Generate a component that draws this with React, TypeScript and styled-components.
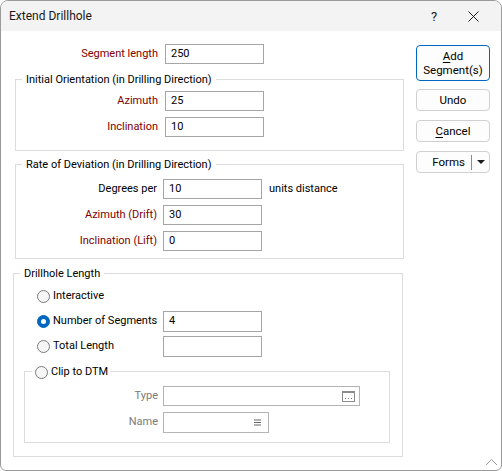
import React from "react";
import styled, { createGlobalStyle } from "styled-components";

const FONT = `Roboto, "Noto Sans", "Liberation Sans", sans-serif`;

const Global = createGlobalStyle`
  html, body { margin: 0; padding: 0; background: #ffffff; }
  body { font-family: ${FONT}; font-size: 11px; color: #000; }
  * { box-sizing: border-box; }
`;

const Window = styled.div`
  position: relative;
  width: 502px;
  height: 471px;
  border: 1px solid #9a9a9a;
  border-radius: 8px 8px 6px 6px;
  background: #ffffff;
  overflow: hidden;
  display: flex;
  flex-direction: column;
`;

const TitleBar = styled.div`
  height: 30px;
  flex: none;
  background: #f3f3f3;
  display: flex;
  align-items: center;
  padding-left: 8px;
`;

const Title = styled.div`
  flex: 1;
  font-size: 12px;
  color: #1a1a1a;
  line-height: 16px;
  margin-top: -1px;
`;

const TitleButton = styled.div<{ $w: number }>`
  width: ${(p) => p.$w}px;
  height: 30px;
  display: flex;
  align-items: center;
  justify-content: center;
  font-size: 13px;
  color: #1a1a1a;
`;

const TitleEnd = styled.div`
  width: 5px;
`;

const Body = styled.div`
  flex: 1;
  display: flex;
  padding-left: 12px;
`;

const MainColumn = styled.div`
  width: 391px;
  display: flex;
  flex-direction: column;
  padding-top: 13px;
`;

const ButtonColumn = styled.div`
  width: 74px;
  margin-left: 12px;
  padding-top: 14px;
  display: flex;
  flex-direction: column;
`;

const Row = styled.div<{ $mt?: number; $pl?: number }>`
  display: flex;
  align-items: center;
  height: 20px;
  margin-top: ${(p) => p.$mt ?? 0}px;
  padding-left: ${(p) => p.$pl ?? 0}px;
`;

const Label = styled.div<{ $w: number; $gap: number; $tone?: "req" | "plain" | "off" }>`
  width: ${(p) => p.$w}px;
  margin-right: ${(p) => p.$gap}px;
  text-align: right;
  white-space: nowrap;
  line-height: 16px;
  color: ${(p) => (p.$tone === "req" ? "#800000" : p.$tone === "off" ? "#7a7a7a" : "#000")};
`;

const Input = styled.div<{ $w: number; $h?: number; $off?: boolean; $pr?: number }>`
  width: ${(p) => p.$w}px;
  height: ${(p) => p.$h ?? 20}px;
  border: 1px solid ${(p) => (p.$off ? "#b4b4b4" : "#a5a5a5")};
  background: #fff;
  display: flex;
  align-items: center;
  padding-left: 5px;
  padding-right: ${(p) => p.$pr ?? 4}px;
  line-height: 16px;
  color: #000;
`;

const InputValue = styled.span`
  flex: 1;
`;

const Suffix = styled.div`
  margin-left: 7px;
  line-height: 16px;
`;

const Group = styled.div<{ $ml: number; $w: number; $mt: number; $pt: number; $pb: number; $mb?: number }>`
  position: relative;
  margin-left: ${(p) => p.$ml}px;
  width: ${(p) => p.$w}px;
  margin-top: ${(p) => p.$mt}px;
  margin-bottom: ${(p) => p.$mb ?? 0}px;
  padding: ${(p) => p.$pt}px 0 ${(p) => p.$pb}px 0;
  border: 1px solid #dcdcdc;
  display: flex;
  flex-direction: column;
`;

const Legend = styled.div<{ $left: number; $pad: number }>`
  position: absolute;
  top: -8px;
  left: ${(p) => p.$left}px;
  padding: 0 ${(p) => p.$pad}px;
  background: #fff;
  line-height: 16px;
  white-space: nowrap;
  display: flex;
  align-items: center;
`;

const RadioItem = styled.div<{ $w?: number }>`
  display: flex;
  align-items: center;
  width: ${(p) => (p.$w ? `${p.$w}px` : "auto")};
  line-height: 16px;
  white-space: nowrap;
`;

const RadioCircle = styled.span<{ $on?: boolean }>`
  width: 13px;
  height: 13px;
  border-radius: 50%;
  flex: none;
  margin-right: 3px;
  border: 1px solid ${(p) => (p.$on ? "#0067c0" : "#7a7a7a")};
  background: ${(p) => (p.$on ? "#0067c0" : "#f6f6f6")};
  display: flex;
  align-items: center;
  justify-content: center;
  &::after {
    content: "";
    display: ${(p) => (p.$on ? "block" : "none")};
    width: 5px;
    height: 5px;
    border-radius: 50%;
    background: #fff;
  }
`;

const Button = styled.div<{ $h: number; $mt: number; $primary?: boolean }>`
  height: ${(p) => p.$h}px;
  margin-top: ${(p) => p.$mt}px;
  border: 1px solid ${(p) => (p.$primary ? "#0067c0" : "#d0d0d0")};
  border-radius: 4px;
  background: #fdfdfd;
  display: flex;
  flex-direction: column;
  align-items: center;
  justify-content: center;
  line-height: 14px;
  font-size: 11.5px;
  color: #000;
`;

const SplitButton = styled.div`
  height: 22px;
  margin-top: 9px;
  border: 1px solid #d0d0d0;
  border-radius: 4px;
  background: #fdfdfd;
  display: flex;
  align-items: center;
  justify-content: flex-end;
  line-height: 15px;
  font-size: 11.5px;
`;

const SplitDivider = styled.span`
  width: 1px;
  height: 15px;
  background: #8a8a8a;
  margin: 0 5px 0 6px;
`;

const Caret = styled.span`
  width: 0;
  height: 0;
  border-left: 4px solid transparent;
  border-right: 4px solid transparent;
  border-top: 4px solid #1a1a1a;
  margin-right: 4px;
`;

const Key = styled.span`
  text-decoration: underline;
  text-underline-offset: 2px;
`;

const Grip = styled.svg`
  position: absolute;
  right: 3px;
  bottom: 4px;
`;

const EllipsisIcon = () => (
  <svg width="13" height="11" viewBox="0 0 13 11">
    <rect x="0.5" y="0.5" width="12" height="10" fill="none" stroke="#8c8c8c" />
    <rect x="0.5" y="0.5" width="12" height="1.5" fill="#8c8c8c" />
    <rect x="3" y="7" width="1" height="1" fill="#777" />
    <rect x="6" y="7" width="1" height="1" fill="#777" />
    <rect x="9" y="7" width="1" height="1" fill="#777" />
  </svg>
);

const ListIcon = () => (
  <svg width="7" height="7" viewBox="0 0 7 7">
    <rect x="0" y="0.5" width="7" height="1" fill="#666" />
    <rect x="0" y="3" width="7" height="1" fill="#666" />
    <rect x="0" y="5.5" width="7" height="1" fill="#666" />
  </svg>
);

export default function App() {
  return (
    <>
      <Global />
      <Window>
        <TitleBar>
          <Title>Extend Drillhole</Title>
          <TitleButton $w={32}>?</TitleButton>
          <TitleButton $w={46}>
            <svg width="11" height="11" viewBox="0 0 11 11">
              <path d="M0.5 0.5 L10.5 10.5 M10.5 0.5 L0.5 10.5" stroke="#1a1a1a" strokeWidth="1" />
            </svg>
          </TitleButton>
          <TitleEnd />
        </TitleBar>
        <Body>
          <MainColumn>
            <Row>
              <Label $w={145} $gap={7} $tone="req">Segment length</Label>
              <Input $w={99}><InputValue>250</InputValue></Input>
            </Row>

            <Group $ml={2} $w={389} $mt={15} $pt={11} $pb={13}>
              <Legend $left={6} $pad={4}>Initial Orientation (in Drilling Direction)</Legend>
              <Row>
                <Label $w={142} $gap={7} $tone="req">Azimuth</Label>
                <Input $w={99}><InputValue>25</InputValue></Input>
              </Row>
              <Row $mt={6}>
                <Label $w={142} $gap={7} $tone="req">Inclination</Label>
                <Input $w={99}><InputValue>10</InputValue></Input>
              </Row>
            </Group>

            <Group $ml={2} $w={389} $mt={13} $pt={14} $pb={7}>
              <Legend $left={6} $pad={4}>Rate of Deviation (in Drilling Direction)</Legend>
              <Row>
                <Label $w={141} $gap={6}>Degrees per</Label>
                <Input $w={99}><InputValue>10</InputValue></Input>
                <Suffix>units distance</Suffix>
              </Row>
              <Row $mt={6}>
                <Label $w={141} $gap={6} $tone="req">Azimuth (Drift)</Label>
                <Input $w={99}><InputValue>30</InputValue></Input>
              </Row>
              <Row $mt={6}>
                <Label $w={141} $gap={6} $tone="req">Inclination (Lift)</Label>
                <Input $w={99}><InputValue>0</InputValue></Input>
              </Row>
            </Group>

            <Group $ml={0} $w={390} $mt={14} $pt={12} $pb={0}>
              <Legend $left={6} $pad={4}>Drillhole Length</Legend>
              <Row $pl={23}>
                <RadioItem><RadioCircle />Interactive</RadioItem>
              </Row>
              <Row $mt={5} $pl={23}>
                <RadioItem $w={126}><RadioCircle $on />Number of Segments</RadioItem>
                <Input $w={99} $h={21}><InputValue>4</InputValue></Input>
              </Row>
              <Row $mt={5} $pl={23}>
                <RadioItem $w={126}><RadioCircle />Total Length</RadioItem>
                <Input $w={99} $h={21} />
              </Row>

              <Group $ml={10} $w={366} $mt={15} $mb={13} $pt={14} $pb={10}>
                <Legend $left={7} $pad={3}>
                  <RadioItem><RadioCircle />Clip to DTM</RadioItem>
                </Legend>
                <Row>
                  <Label $w={133} $gap={5} $tone="off">Type</Label>
                  <Input $w={197} $off>
                    <InputValue />
                    <EllipsisIcon />
                  </Input>
                </Row>
                <Row $mt={6}>
                  <Label $w={133} $gap={5} $tone="off">Name</Label>
                  <Input $w={106} $h={21} $off $pr={7}>
                    <InputValue />
                    <ListIcon />
                  </Input>
                </Row>
              </Group>
            </Group>
          </MainColumn>

          <ButtonColumn>
            <Button $h={36} $mt={0} $primary>
              <span><Key>A</Key>dd</span>
              <span>Segment(s)</span>
            </Button>
            <Button $h={22} $mt={8}>Undo</Button>
            <Button $h={22} $mt={9}><span><Key>C</Key>ancel</span></Button>
            <SplitButton>
              Forms
              <SplitDivider />
              <Caret />
            </SplitButton>
          </ButtonColumn>
        </Body>
        <Grip width="13" height="8" viewBox="0 0 13 8">
          <path d="M1 7 L6.5 1.5 L12 7" fill="none" stroke="#9a9a9a" strokeWidth="1" />
        </Grip>
      </Window>
    </>
  );
}
